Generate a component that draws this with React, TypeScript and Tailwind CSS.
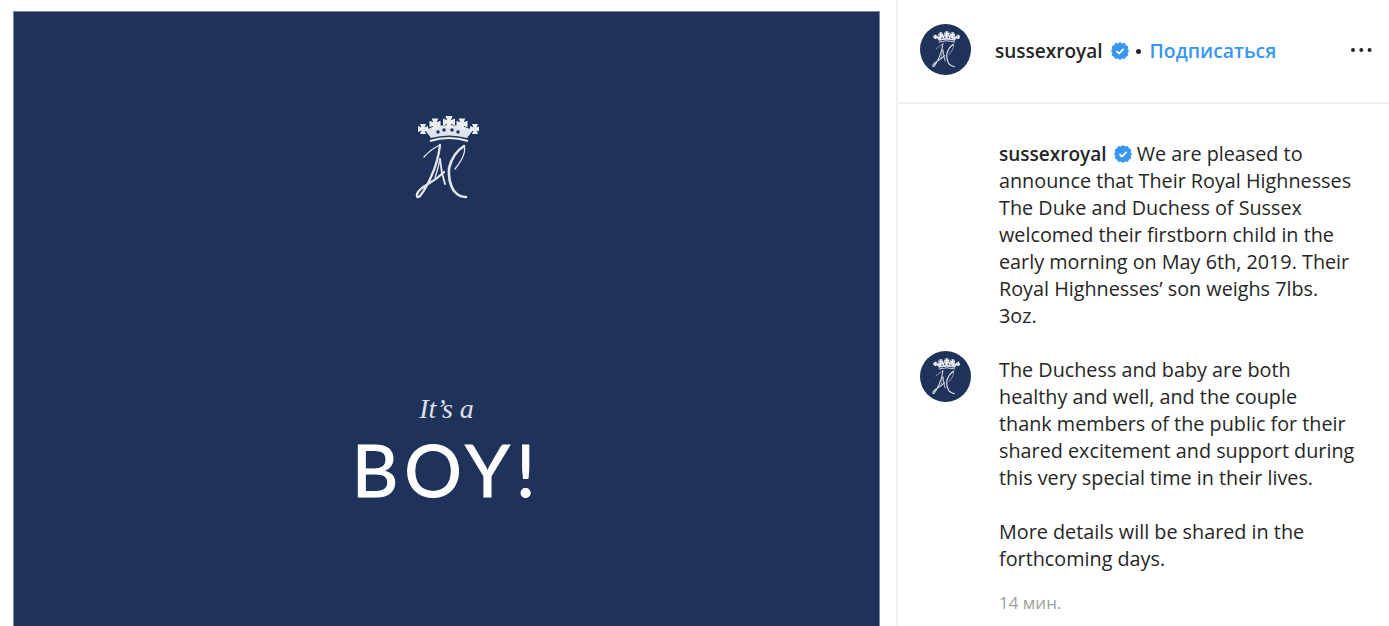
// Crown + HM monogram, drawn at 64x84 units
function Cross({ x, y, r = 5 }: { x: number; y: number; r?: number }) {
  const w = r * 0.6;
  return (
    <path
      d={`M${x - w} ${y - r} H${x + w} L${x + w * 0.5} ${y - w * 0.5} L${x + r} ${y - w} V${y + w} L${x + w * 0.5} ${y + w * 0.5} L${x + w} ${y + r} H${x - w} L${x - w * 0.5} ${y + w * 0.5} L${x - r} ${y + w} V${y - w} L${x - w * 0.5} ${y - w * 0.5} Z`}
      fill="#eef1f5"
    />
  );
}

function Cypher({ className }: { className?: string }) {
  return (
    <svg viewBox="0 0 64 84" className={className} fill="none">
      {/* crown */}
      <path d="M10 14 L20 10 L34 9 L47 10 L58 14 L52 22 Q34 17 16 22 Z" fill="#dfe3ea" />
      <Cross x={20} y={8} r={5.5} />
      <Cross x={34} y={6} r={6} />
      <Cross x={47} y={8} r={5.5} />
      <Cross x={8} y={13} r={5} />
      <Cross x={60} y={13} r={5} />
      <path d="M15 25 Q34 19 53 25" stroke="#e9edf3" strokeWidth="2" />
      <circle cx="23" cy="16" r="1.7" fill="#1f3259" />
      <circle cx="29" cy="14" r="1.7" fill="#1f3259" />
      <circle cx="37" cy="14" r="1.7" fill="#1f3259" />
      <circle cx="43" cy="16" r="1.7" fill="#1f3259" />
      {/* monogram */}
      <g stroke="#e2e6ed" strokeLinecap="round">
        <path d="M9 41 Q16 33 25 29" strokeWidth="1.3" />
        <path d="M25 29 Q23 46 16 61 Q10 74 5 80 Q1 83 2 78 Q4 73 13 68 Q22 63 29 56" strokeWidth="2.3" />
        <path d="M25 43 Q23 53 20 62" strokeWidth="1.3" />
        <path d="M25 43 Q26 56 30 68" strokeWidth="1.9" />
        <path d="M49 30 Q38 37 34 52 Q33 66 39 75 Q44 81 51 81" strokeWidth="2.6" />
        <path d="M49 30 Q52 38 40 53" strokeWidth="1.3" />
      </g>
    </svg>
  );
}

function Avatar() {
  return (
    <div className="w-[51px] h-[51px] rounded-full bg-[#1f3259] flex items-center justify-center shrink-0">
      <Cypher className="w-[28px] h-[37px]" />
    </div>
  );
}

function Verified() {
  return (
    <svg viewBox="0 0 18 18" className="w-[18px] h-[18px] shrink-0">
      <path
        d="M9 0 L11.2 1.5 L13.8 1 L15 3.2 L17.2 4.5 L16.7 7 L18 9 L16.7 11 L17.2 13.5 L15 14.8 L13.8 17 L11.2 16.5 L9 18 L6.8 16.5 L4.2 17 L3 14.8 L0.8 13.5 L1.3 11 L0 9 L1.3 7 L0.8 4.5 L3 3.2 L4.2 1 L6.8 1.5 Z"
        fill="#3897f0"
      />
      <path d="M5.4 9.2 L8 11.6 L12.6 6.8" stroke="#fff" strokeWidth="1.8" fill="none" />
    </svg>
  );
}

export default function App() {
  return (
    <div className="h-screen overflow-hidden bg-white flex font-['Open_Sans',sans-serif] text-[#262626]">
      {/* Photo */}
      <div className="w-[896px] shrink-0 pl-[13px] pt-[11px]">
        <div className="w-[867px] h-[867px] bg-[#1f3259] border-t border-x border-[#7f8aa0] flex flex-col items-center">
          <Cypher className="w-[64px] h-[84px] mt-[104px]" />
          <p className="mt-[192px] text-[28px] leading-[34px] italic text-[#dde1e9] font-['Liberation_Serif',serif]">
            It&rsquo;s a
          </p>
          <p className="mt-[3px] text-[72px] leading-[80px] tracking-[6px] text-white font-['Lato',sans-serif] [-webkit-text-stroke:1px_white]">
            BOY!
          </p>
        </div>
      </div>

      {/* Side panel */}
      <div className="flex-1 border-l-2 border-[#efefef] min-w-0">
        <div className="h-[104px] border-b-2 border-[#efefef] pl-[22px] pr-[16px] flex items-center">
          <div className="mb-[3px]">
            <Avatar />
          </div>
          <span className="ml-[24px] text-[19px] font-semibold">sussexroyal</span>
          <span className="ml-[8px]"><Verified /></span>
          <span className="ml-[7px] w-[5px] h-[5px] rounded-full bg-[#262626]" />
          <span className="ml-[9px] text-[19.4px] font-semibold text-[#3897f0]">Подписаться</span>
          <svg viewBox="0 0 24 24" className="ml-auto w-[24px] h-[24px] mb-[3px]">
            <circle cx="4" cy="12" r="2" fill="#262626" />
            <circle cx="12.3" cy="12" r="2" fill="#262626" />
            <circle cx="20.6" cy="12" r="2" fill="#262626" />
          </svg>
        </div>

        <div className="flex pl-[22px] pt-[36px]">
          <div className="w-[79px] shrink-0 pt-[211px]">
            <Avatar />
          </div>
          <div className="w-[366px] text-[19.8px] leading-[27px]">
            <p className="w-[354px]">
              <span className="font-semibold text-[19px] leading-none">sussexroyal</span>{" "}
              <span className="inline-block align-[-2px] ml-[2px]"><Verified /></span> We are pleased to
              announce that Their Royal Highnesses The Duke and Duchess of Sussex welcomed their
              firstborn child in the early morning on May 6th, 2019. Their Royal Highnesses&rsquo;
              son weighs 7lbs. 3oz.
            </p>
            <p className="mt-[27px]">
              The Duchess and baby are both
              <br />
              healthy and well, and the couple
              <br />
              thank members of the public for their
              <br />
              shared excitement and support during
              <br />
              this very special time in their lives.
            </p>
            <p className="mt-[27px] w-[354px]">More details will be shared in the forthcoming days.</p>
            <p className="mt-[17px] text-[17px] leading-[27px] text-[#a0a0a0]">14 мин.</p>
          </div>
        </div>
      </div>
    </div>
  );
}
